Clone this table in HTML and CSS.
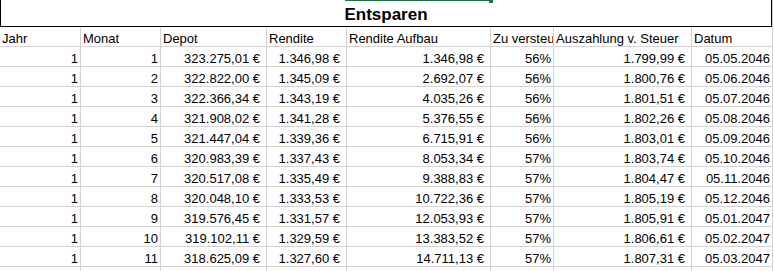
FILE: index.html
```html
<!DOCTYPE html>
<html lang="de">
<head>
<meta charset="utf-8">
<title>Entsparen</title>
<link rel="stylesheet" href="styles.css">
</head>
<body>
<div class="sheet">
  <div class="selection"><span class="handle"></span></div>
  <div class="title">Entsparen</div>
  <div class="grid">
    <div class="c h">Jahr</div><div class="c h">Monat</div><div class="c h">Depot</div><div class="c h">Rendite</div><div class="c h">Rendite Aufbau</div><div class="c h">Zu versteuern</div><div class="c h">Auszahlung v. Steuer</div><div class="c h last">Datum</div>

    <div class="c n">1</div><div class="c n">1</div><div class="c e">323.275,01 €</div><div class="c e">1.346,98 €</div><div class="c e">1.346,98 €</div><div class="c n">56%</div><div class="c e">1.799,99 €</div><div class="c n last">05.05.2046</div>
    <div class="c n">1</div><div class="c n">2</div><div class="c e">322.822,00 €</div><div class="c e">1.345,09 €</div><div class="c e">2.692,07 €</div><div class="c n">56%</div><div class="c e">1.800,76 €</div><div class="c n last">05.06.2046</div>
    <div class="c n">1</div><div class="c n">3</div><div class="c e">322.366,34 €</div><div class="c e">1.343,19 €</div><div class="c e">4.035,26 €</div><div class="c n">56%</div><div class="c e">1.801,51 €</div><div class="c n last">05.07.2046</div>
    <div class="c n">1</div><div class="c n">4</div><div class="c e">321.908,02 €</div><div class="c e">1.341,28 €</div><div class="c e">5.376,55 €</div><div class="c n">56%</div><div class="c e">1.802,26 €</div><div class="c n last">05.08.2046</div>
    <div class="c n">1</div><div class="c n">5</div><div class="c e">321.447,04 €</div><div class="c e">1.339,36 €</div><div class="c e">6.715,91 €</div><div class="c n">56%</div><div class="c e">1.803,01 €</div><div class="c n last">05.09.2046</div>
    <div class="c n">1</div><div class="c n">6</div><div class="c e">320.983,39 €</div><div class="c e">1.337,43 €</div><div class="c e">8.053,34 €</div><div class="c n">57%</div><div class="c e">1.803,74 €</div><div class="c n last">05.10.2046</div>
    <div class="c n">1</div><div class="c n">7</div><div class="c e">320.517,08 €</div><div class="c e">1.335,49 €</div><div class="c e">9.388,83 €</div><div class="c n">57%</div><div class="c e">1.804,47 €</div><div class="c n last">05.11.2046</div>
    <div class="c n">1</div><div class="c n">8</div><div class="c e">320.048,10 €</div><div class="c e">1.333,53 €</div><div class="c e">10.722,36 €</div><div class="c n">57%</div><div class="c e">1.805,19 €</div><div class="c n last">05.12.2046</div>
    <div class="c n">1</div><div class="c n">9</div><div class="c e">319.576,45 €</div><div class="c e">1.331,57 €</div><div class="c e">12.053,93 €</div><div class="c n">57%</div><div class="c e">1.805,91 €</div><div class="c n last">05.01.2047</div>
    <div class="c n">1</div><div class="c n">10</div><div class="c e">319.102,11 €</div><div class="c e">1.329,59 €</div><div class="c e">13.383,52 €</div><div class="c n">57%</div><div class="c e">1.806,61 €</div><div class="c n last">05.02.2047</div>
    <div class="c n">1</div><div class="c n">11</div><div class="c e">318.625,09 €</div><div class="c e">1.327,60 €</div><div class="c e">14.711,13 €</div><div class="c n">57%</div><div class="c e">1.807,31 €</div><div class="c n last">05.03.2047</div>
    <div class="c"></div><div class="c"></div><div class="c"></div><div class="c"></div><div class="c"></div><div class="c"></div><div class="c"></div><div class="c last"></div>
  </div>
</div>
</body>
</html>
```
FILE: styles.css
```css
html, body {
  margin: 0;
  padding: 0;
  background: #ffffff;
  overflow: hidden;
}

body {
  font-family: "Liberation Sans", Arial, sans-serif;
  font-size: 13px;
  color: #000000;
}

.sheet {
  position: relative;
  width: 772px;
  height: 271px;
  overflow: hidden;
  border-right: 1px solid #d4d4d4;
}

.selection {
  position: absolute;
  left: 345px;
  top: 0;
  width: 146px;
  height: 1px;
  background: #1e7145;
}

.handle {
  position: absolute;
  right: -2px;
  top: 0;
  width: 4px;
  height: 3px;
  background: #1e7145;
}

.title {
  box-sizing: border-box;
  height: 27px;
  border-left: 1px solid #000;
  border-right: 1px solid #000;
  border-bottom: 1px solid #000;
  text-align: center;
  font-weight: bold;
  font-size: 17px;
  line-height: 20px;
  padding-top: 5px;
}

.grid {
  display: grid;
  grid-template-columns: 81px 80px 106px 80px 144px 63px 138px 80px;
  grid-auto-rows: 20px;
}

.c {
  box-sizing: border-box;
  height: 20px;
  border-right: 1px solid #d4d4d4;
  border-bottom: 1px solid #d4d4d4;
  padding: 4px 2px 0 2px;
  line-height: 16px;
  white-space: nowrap;
  overflow: hidden;
}

.c.last {
  border-right: none;
}

.h {
  text-align: left;
  padding-left: 2px;
  padding-right: 0;
}

.n {
  text-align: right;
  padding-right: 2px;
}

.e {
  text-align: right;
  padding-right: 6px;
}
```
